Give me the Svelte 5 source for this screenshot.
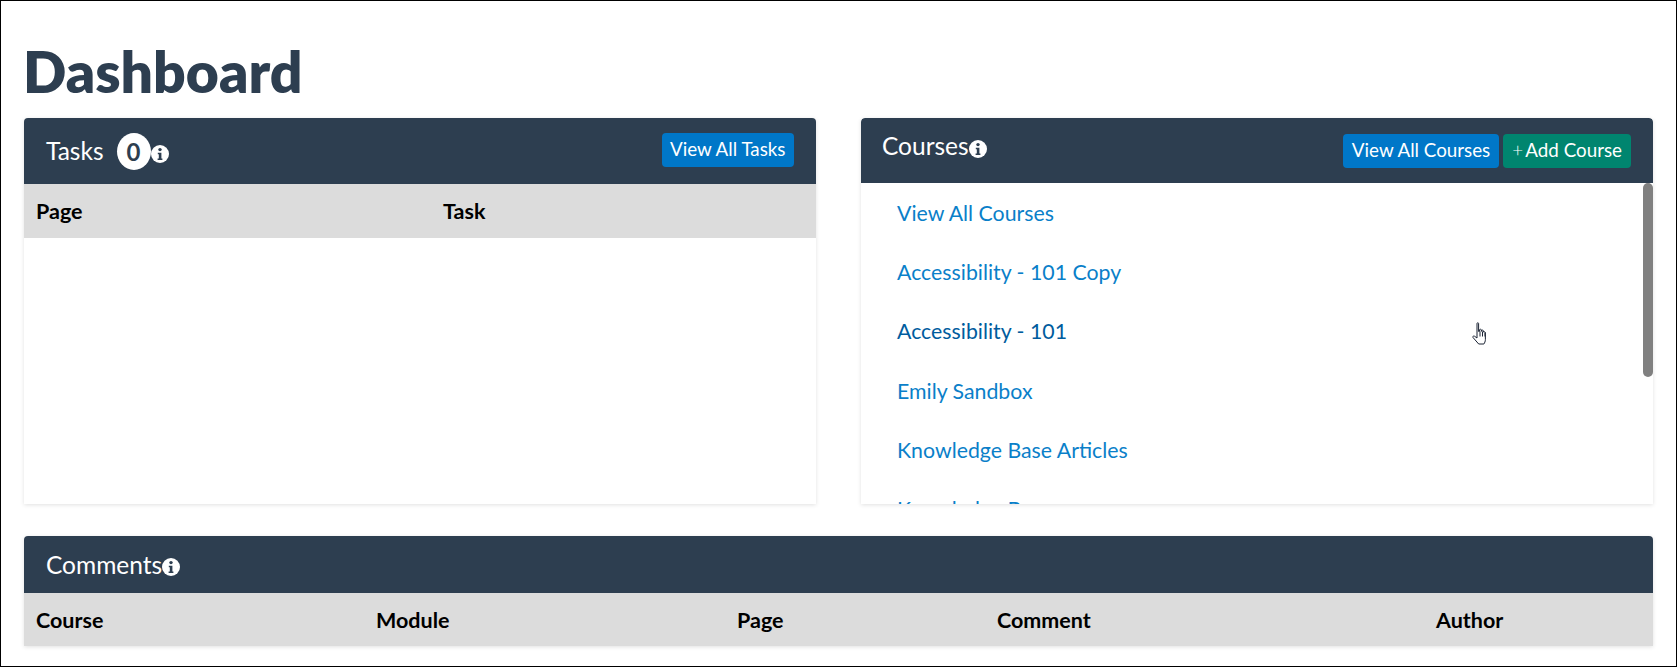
<script>
	const courses = [
		{ name: 'View All Courses' },
		{ name: 'Accessibility - 101 Copy' },
		{ name: 'Accessibility - 101', hover: true },
		{ name: 'Emily Sandbox' },
		{ name: 'Knowledge Base Articles' },
		{ name: 'Knowledge Base' }
	];
	const taskCols = ['Page', 'Task'];
	const commentCols = ['Course', 'Module', 'Page', 'Comment', 'Author'];
</script>

{#snippet info()}
	<svg class="info" viewBox="0 0 18 18" aria-hidden="true">
		<circle cx="9" cy="9" r="9" fill="#fff" />
		<circle cx="9" cy="4.600" r="1.700" fill="#2d3e50" />
		<path d="M6.800 7.700h3.600v5.900h1v1.500H6.600v-1.500h1.200V9.200h-1z" fill="#2d3e50" />
	</svg>
{/snippet}

<div class="page">
	<h1>Dashboard</h1>

	<div class="top">
		<section class="panel">
			<header class="head tasks-head">
				<div class="title">
					<h2>Tasks</h2>
					<span class="badge">0</span>
					{@render info()}
				</div>
				<button class="btn blue">View All Tasks</button>
			</header>
			<div class="cols task-cols">
				{#each taskCols as col}
					<span>{col}</span>
				{/each}
			</div>
		</section>

		<section class="panel courses">
			<header class="head courses-head">
				<div class="title">
					<h2>Courses</h2>
					{@render info()}
				</div>
				<div class="actions">
					<button class="btn blue">View All Courses</button>
					<button class="btn green"><span class="plus">+</span> Add Course</button>
				</div>
			</header>
			<ul class="list">
				{#each courses as course}
					<li><a href="#top" class:hover={course.hover}>{course.name}</a></li>
				{/each}
			</ul>
			<div class="thumb"></div>
			<svg class="cursor" viewBox="0 0 18 24" aria-hidden="true">
				<path
					d="M5 1.500c0-1 1.600-1 1.600 0v8l1-.2V7.600c.8-.6 1.600-.4 1.800.3v1.500l.2-1c.8-.5 1.600-.3 1.800.4v1.200c.7-.5 1.600-.3 1.900.4l.1 7c0 2-.9 3.600-1.500 4.600H6.700L1 15.500c-.6-1 .6-2 1.500-1.300L5 16z"
					fill="#fff"
					stroke="#1a2233"
					stroke-width="1"
				/>
				<path d="M8 9.500v5M10.500 9.500v5M13 10.500v4" stroke="#1a2233" stroke-width="1" />
			</svg>
		</section>
	</div>

	<section class="panel comments">
		<header class="head comments-head">
			<div class="title">
				<h2>Comments</h2>
				{@render info()}
			</div>
		</header>
		<div class="cols comment-cols">
			{#each commentCols as col}
				<span>{col}</span>
			{/each}
		</div>
	</section>
</div>

<style>
	:global(body) {
		margin: 0;
		background: #fff;
	}

	.page {
		box-sizing: border-box;
		height: 667px;
		border: 1px solid #000;
		padding: 36px 23px 0;
		font-family: Lato, sans-serif;
		overflow: hidden;
	}

	h1 {
		margin: 0 0 12px -1px;
		color: #2d3e50;
		font-size: 57px;
		font-weight: 800;
		line-height: 69px;
	}

	.top {
		display: grid;
		grid-template-columns: 792px 792px;
		gap: 45px;
		height: 386px;
	}

	.panel {
		position: relative;
		background: #fff;
		border-radius: 4px 4px 0 0;
		box-shadow: 0 1px 4px rgba(0, 0, 0, 0.12);
	}

	.head {
		box-sizing: border-box;
		display: flex;
		align-items: center;
		justify-content: space-between;
		background: #2d3e50;
		border-radius: 4px 4px 0 0;
		padding: 0 22px;
		color: #fff;
	}

	.tasks-head {
		height: 66px;
	}

	.tasks-head .info {
		margin-top: 6px;
	}

	.tasks-head .btn {
		margin-bottom: 2px;
	}

	.courses-head {
		height: 65px;
		padding-left: 21px;
	}

	.courses-head .title {
		padding-bottom: 10px;
	}

	.courses-head .info {
		margin-top: 6px;
	}

	.courses-head .btn {
		padding: 0 9px 3px;
	}

	.comments-head {
		height: 57px;
	}

	.title {
		display: flex;
		align-items: center;
	}

	h2 {
		margin: 0;
		font-size: 24.500px;
		font-weight: 400;
		line-height: 28px;
	}

	.badge {
		box-sizing: border-box;
		width: 34px;
		height: 37px;
		margin-left: 13px;
		background: #fff;
		border-radius: 50%;
		color: #2d3e50;
		font-size: 24px;
		font-weight: 700;
		line-height: 37px;
		text-align: center;
	}

	.info {
		display: block;
		width: 18px;
		height: 18px;
		margin-top: 4px;
	}

	.actions {
		display: flex;
		gap: 4px;
	}

	.btn {
		box-sizing: border-box;
		height: 34px;
		padding: 0 8.500px 3px;
		border: none;
		border-radius: 4px;
		color: #fff;
		font-family: inherit;
		font-size: 18.800px;
		line-height: 31px;
	}

	.blue {
		background: #0077c8;
	}

	.green {
		background: #00856f;
	}

	.plus {
		font-weight: 300;
		margin-right: -2px;
	}

	.cols {
		display: grid;
		align-items: center;
		background: #dcdcdc;
		color: #000;
		font-size: 21.500px;
		font-weight: 700;
		padding-left: 12px;
	}

	.task-cols {
		height: 54px;
		grid-template-columns: 407px 1fr;
	}

	.comment-cols {
		height: 53px;
		grid-template-columns: 340px 361px 260px 439px 1fr;
	}

	.courses {
		overflow: hidden;
	}

	.list {
		height: 321px;
		margin: 0;
		padding: 0 0 0 36px;
		list-style: none;
		overflow: hidden;
	}

	.thumb {
		position: absolute;
		top: 65px;
		right: 0;
		width: 10px;
		height: 194px;
		background: #808080;
		border-radius: 5px;
	}

	li {
		height: 59.300px;
		display: flex;
		align-items: center;
		font-size: 21.300px;
	}

	a {
		color: #0a7fc9;
		text-decoration: none;
	}

	a.hover {
		color: #005c9e;
	}

	.cursor {
		position: absolute;
		left: 611px;
		top: 204px;
		width: 18px;
		height: 24px;
	}

	.comments {
		margin-top: 32px;
	}
</style>
